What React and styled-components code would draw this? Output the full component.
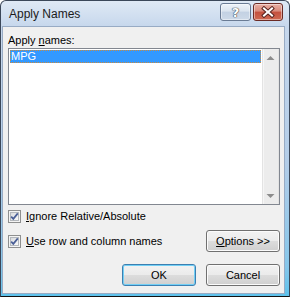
import React from 'react';
import styled, { createGlobalStyle } from 'styled-components';

const Global = createGlobalStyle`
  html, body { margin: 0; padding: 0; background: #ffffff; }
  body { font-family: "Liberation Sans", Arial, sans-serif; font-size: 11px; color: #000; }
  #root { width: 290px; height: 297px; }
`;

const Window = styled.div`
  box-sizing: border-box;
  width: 290px;
  height: 297px;
  border: 1px solid #3b4759;
  border-bottom-color: #111;
  border-radius: 6px 6px 0 0;
  padding: 0 4px 2px 1px;
  background: linear-gradient(to bottom, #dfe9f5 0px, #c6d7ec 26px, #b3cde8 55%, #86c6ea 90%, #5ec2ec 100%);
  display: flex;
  flex-direction: column;
`;

const TitleBar = styled.div`
  height: 25px;
  display: flex;
  align-items: center;
  padding: 0 2px 0 7px;
  gap: 2px;
`;

const Title = styled.div`
  flex: 1;
  font-family: "Liberation Sans", Arial, sans-serif;
  font-size: 12px;
  color: #1b1b1b;
  line-height: 16px;
  margin-top: 1px;
`;

const CaptionButton = styled.div`
  box-sizing: border-box;
  align-self: flex-start;
  margin-top: 2px;
  width: ${p => p.$w}px;
  height: 18px;
  border: 1px solid ${p => (p.$close ? '#6b2a24' : '#6a7b94')};
  border-radius: 3px;
  display: flex;
  align-items: center;
  justify-content: center;
  background: ${p =>
    p.$close
      ? 'linear-gradient(to bottom, #e9b0a5 0%, #d98a7b 45%, #c4503e 50%, #cf6a53 100%)'
      : 'linear-gradient(to bottom, #eef3f9 0%, #dbe4ef 45%, #c3d1e3 50%, #cdd9e8 100%)'};
  box-shadow: inset 0 0 0 1px rgba(255, 255, 255, 0.45);
`;

const HelpGlyph = styled.span`
  font-family: "DejaVu Sans", sans-serif;
  font-weight: bold;
  font-size: 13px;
  line-height: 13px;
  color: #ffffff;
  text-shadow: 0 0 1px #3a4250, 0 0 1px #3a4250, 0 0 1px #3a4250;
`;

const Client = styled.div`
  box-sizing: border-box;
  flex: 1;
  border: 1px solid #98abc4;
  background: #f0f0f0;
  padding: 5px 4px 0 5px;
  display: flex;
  flex-direction: column;
`;

const Label = styled.div`
  height: 16px;
  line-height: 16px;
`;

const U = styled.span`
  text-decoration: underline;
  text-underline-offset: 1px;
`;

const ListBox = styled.div`
  box-sizing: border-box;
  height: 157px;
  border: 1px solid #828790;
  background: #ffffff;
  display: flex;
`;

const ListArea = styled.div`
  flex: 1;
  padding: 1px 1px 0 1px;
`;

const ListItem = styled.div`
  height: 13px;
  line-height: 13px;
  padding-left: 1px;
  background: ${p => (p.$selected ? '#3399ff' : 'transparent')};
  color: ${p => (p.$selected ? '#ffffff' : '#000')};
  outline: ${p => (p.$selected ? '1px dotted #c98a3f' : 'none')};
  outline-offset: -1px;
`;

const ScrollBar = styled.div`
  width: 17px;
  display: flex;
  flex-direction: column;
  justify-content: space-between;
  background: linear-gradient(to right, #e3e3e3 0 1px, #f6f6f6 1px 2px, #ececec 2px 16px, #e3e3e3 16px);
`;

const ArrowBox = styled.div`
  height: 17px;
  display: flex;
  align-items: center;
  justify-content: center;
`;

const CheckRow = styled.label`
  display: flex;
  align-items: center;
  gap: 5px;
  height: ${p => p.$h || 13}px;
  line-height: 13px;
`;

const Row1 = styled.div`
  margin-top: 5px;
`;

const Row2 = styled.div`
  margin-top: 7px;
  display: flex;
  align-items: center;
  justify-content: space-between;
  height: 22px;
`;

const ButtonRow = styled.div`
  margin-top: 12px;
  display: flex;
  justify-content: flex-end;
  gap: 10px;
`;

const Button = styled.button`
  box-sizing: border-box;
  width: 74px;
  height: 22px;
  padding: 0;
  font-family: "Liberation Sans", Arial, sans-serif;
  font-size: 11px;
  color: #000;
  border: 1px solid ${p => (p.$default ? '#3c7fb1' : '#707070')};
  border-radius: 3px;
  background: linear-gradient(to bottom, #f2f2f2 0%, #ebebeb 50%, #dddddd 50%, #cfcfcf 100%);
  box-shadow: inset 0 0 0 1px ${p => (p.$default ? '#72cff5' : '#fbfbfb')};
`;

const CheckBox = () => (
  <svg width="13" height="13" viewBox="0 0 13 13">
    <defs>
      <linearGradient id="cbg" x1="0" y1="0" x2="1" y2="1">
        <stop offset="0" stopColor="#d7d9dc" />
        <stop offset="1" stopColor="#fbfbfb" />
      </linearGradient>
    </defs>
    <rect x="0.5" y="0.5" width="12" height="12" fill="#f4f4f4" stroke="#8e8f8f" />
    <rect x="2.5" y="2.5" width="8" height="8" fill="url(#cbg)" stroke="#b4b8bd" />
    <path d="M3.2 6.6 L5.3 8.9 L9.8 3.4" fill="none" stroke="#4a5f97" strokeWidth="1.7" />
  </svg>
);

const UpArrow = () => (
  <svg width="9" height="6" viewBox="0 0 9 6">
    <path d="M0.5 5 L4.5 1 L8.5 5 Z" fill="#8c8c8c" />
  </svg>
);

const DownArrow = () => (
  <svg width="9" height="6" viewBox="0 0 9 6">
    <path d="M0.5 1 L4.5 5 L8.5 1 Z" fill="#8c8c8c" />
  </svg>
);

const CloseIcon = () => (
  <svg width="14" height="12" viewBox="0 0 14 12">
    <path d="M3 2.5 L11 9.5 M11 2.5 L3 9.5" stroke="#5a2520" strokeWidth="4" strokeLinecap="square" fill="none" />
    <path d="M3 2.5 L11 9.5 M11 2.5 L3 9.5" stroke="#ffffff" strokeWidth="2" strokeLinecap="square" fill="none" />
  </svg>
);

export default function App() {
  return (
    <>
      <Global />
      <Window>
        <TitleBar>
          <Title>Apply Names</Title>
          <CaptionButton $w={31}>
            <HelpGlyph>?</HelpGlyph>
          </CaptionButton>
          <CaptionButton $w={30} $close>
            <CloseIcon />
          </CaptionButton>
        </TitleBar>
        <Client>
          <Label>
            Apply <U>n</U>ames:
          </Label>
          <ListBox>
            <ListArea>
              <ListItem $selected>MPG</ListItem>
            </ListArea>
            <ScrollBar>
              <ArrowBox>
                <UpArrow />
              </ArrowBox>
              <ArrowBox>
                <DownArrow />
              </ArrowBox>
            </ScrollBar>
          </ListBox>
          <Row1>
            <CheckRow>
              <CheckBox />
              <span>
                <U>I</U>gnore Relative/Absolute
              </span>
            </CheckRow>
          </Row1>
          <Row2>
            <CheckRow>
              <CheckBox />
              <span>
                <U>U</U>se row and column names
              </span>
            </CheckRow>
            <Button>
              <U>O</U>ptions &gt;&gt;
            </Button>
          </Row2>
          <ButtonRow>
            <Button $default>OK</Button>
            <Button>Cancel</Button>
          </ButtonRow>
        </Client>
      </Window>
    </>
  );
}
